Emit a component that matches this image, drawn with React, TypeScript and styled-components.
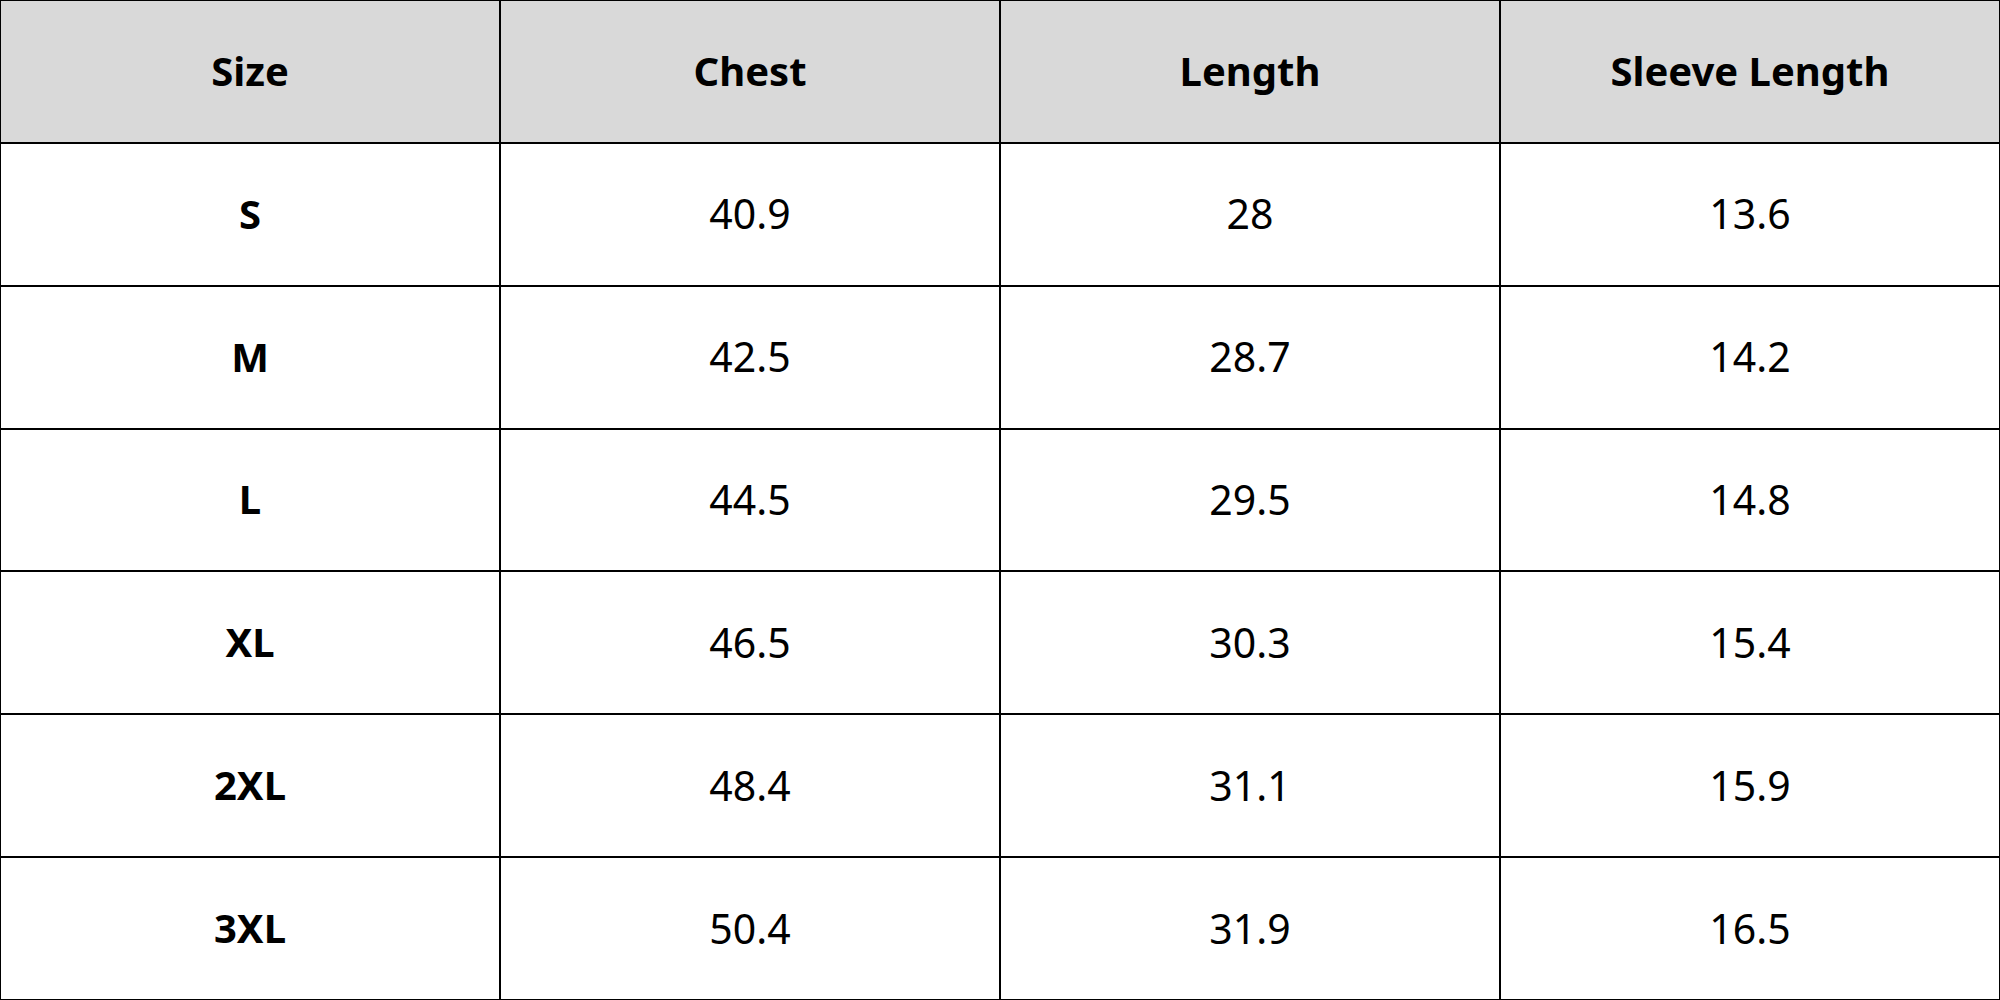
import { Fragment } from "react";
import styled, { createGlobalStyle } from "styled-components";

type Row = {
  size: string;
  chest: string;
  length: string;
  sleeve: string;
};

const rows: Row[] = [
  { size: "S", chest: "40.9", length: "28", sleeve: "13.6" },
  { size: "M", chest: "42.5", length: "28.7", sleeve: "14.2" },
  { size: "L", chest: "44.5", length: "29.5", sleeve: "14.8" },
  { size: "XL", chest: "46.5", length: "30.3", sleeve: "15.4" },
  { size: "2XL", chest: "48.4", length: "31.1", sleeve: "15.9" },
  { size: "3XL", chest: "50.4", length: "31.9", sleeve: "16.5" },
];

const headers = ["Size", "Chest", "Length", "Sleeve Length"];

const App = () => {
  return (
    <>
      <GlobalStyle />
      <SizeTable>
        {headers.map((h) => (
          <HeadCell key={h}>{h}</HeadCell>
        ))}
        {rows.map((row) => (
          <Fragment key={row.size}>
            <Cell $bold>{row.size}</Cell>
            <Cell>{row.chest}</Cell>
            <Cell>{row.length}</Cell>
            <Cell>{row.sleeve}</Cell>
          </Fragment>
        ))}
      </SizeTable>
    </>
  );
};

const GlobalStyle = createGlobalStyle`
  html, body {
    margin: 0;
    padding: 0;
    background: #fff;
  }
  body {
    font-family: "Noto Sans", "Open Sans", sans-serif;
  }
`;

const SizeTable = styled.div`
  display: grid;
  grid-template-columns: repeat(4, 1fr);
  grid-template-rows: repeat(7, 1fr);
  gap: 2px;
  padding: 1px;
  width: 100vw;
  height: 100vh;
  box-sizing: border-box;
  background-color: #000;
`;

const Cell = styled.div<{ $bold?: boolean }>`
  display: flex;
  align-items: center;
  justify-content: center;
  padding-bottom: 2px;
  background-color: #fff;
  color: #000;
  font-size: ${(p) => (p.$bold ? "40px" : "41px")};
  font-weight: ${(p) => (p.$bold ? 700 : 400)};
`;

const HeadCell = styled(Cell)`
  background-color: #d9d9d9;
  font-size: 40px;
  font-weight: 700;
`;

export default App;
